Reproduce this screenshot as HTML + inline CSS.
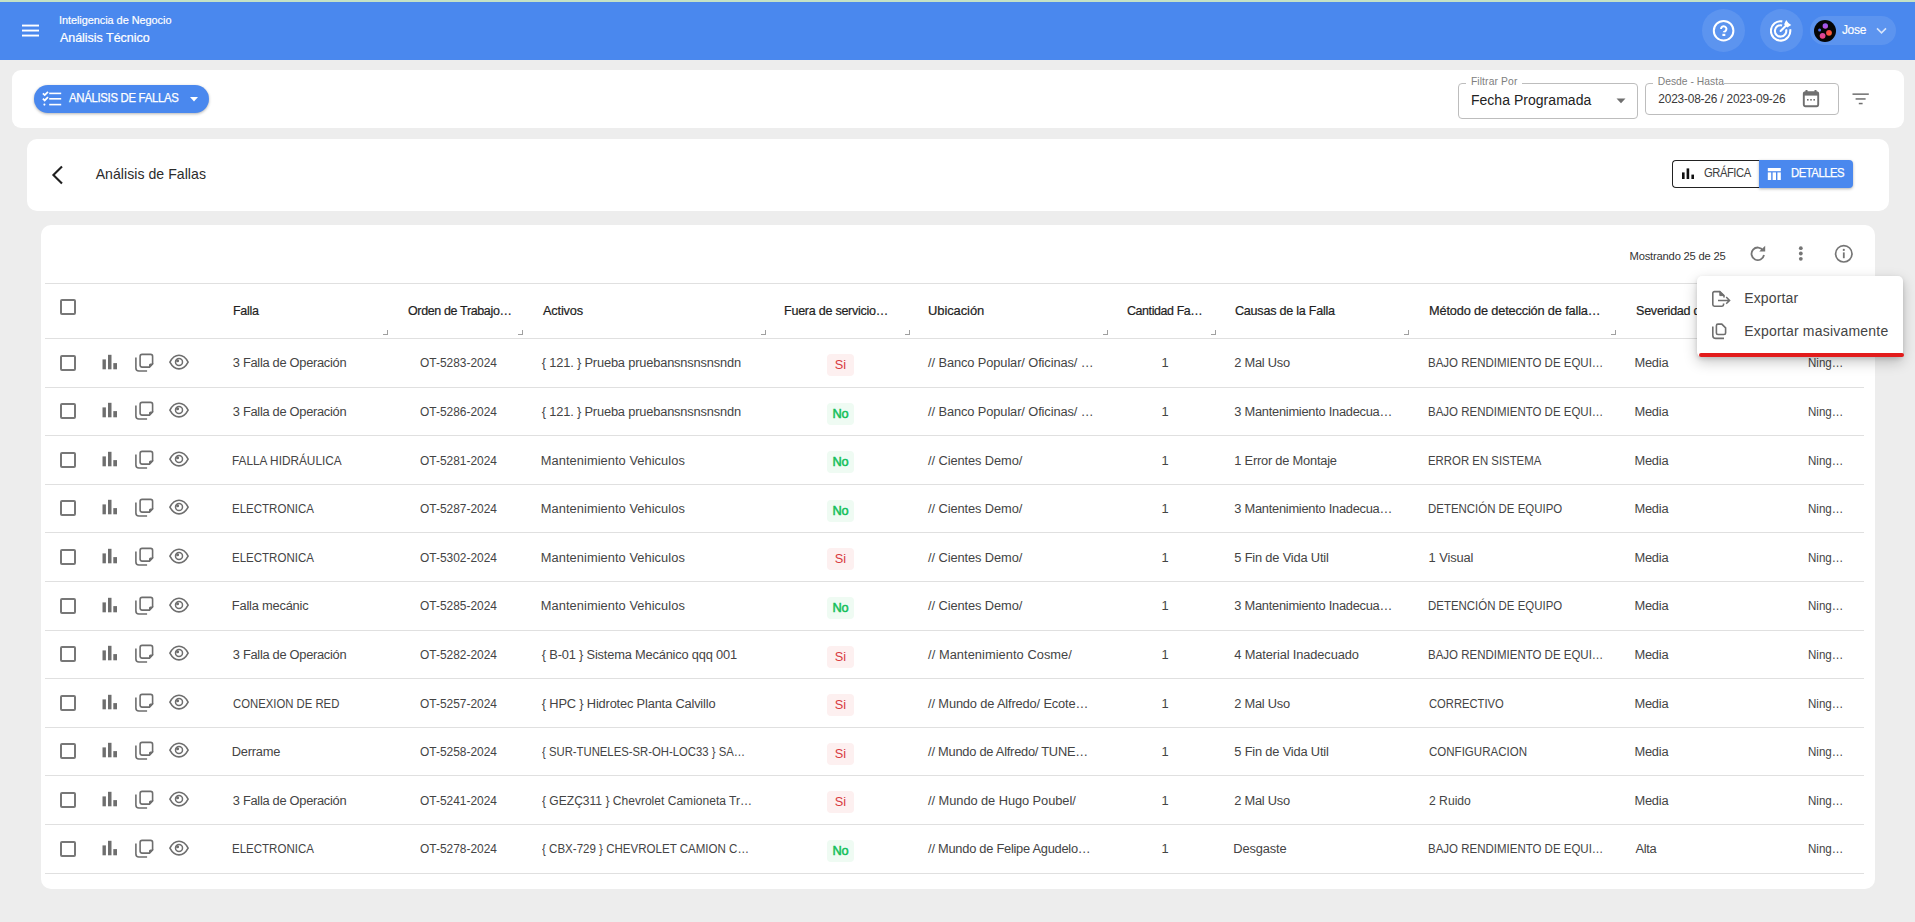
<!DOCTYPE html>
<html><head><meta charset="utf-8">
<style>
*{box-sizing:border-box;margin:0;padding:0}
html,body{width:1915px;height:922px;overflow:hidden;background:#ededed;font-family:"Liberation Sans",sans-serif;color:#212121;position:relative}
.abs{position:absolute}
svg{display:block}
.tx{position:absolute;line-height:20px;white-space:nowrap}
.ic{position:absolute}
.card{position:absolute;background:#fff;border-radius:10px}
.field{position:absolute;border:1px solid #bdbdbd;border-radius:4px}
.hcirc{position:absolute;width:43px;height:43px;border-radius:50%;background:rgba(255,255,255,0.1)}
.hl{position:absolute;left:45px;width:1819px;height:1px;background:#e0e0e0}
.cb{position:absolute;width:16px;height:16px;border:2px solid #777;border-radius:2px}
.badge{position:absolute;width:27px;height:22px;border-radius:4px;font-size:12.8px;line-height:22px;text-align:center}
.badge.si{background:#fdf0f0;color:#d83a3f}
.badge.no{background:#effbf3;color:#12bf59;-webkit-text-stroke:0.5px #12bf59;letter-spacing:-0.2px}
.handle{position:absolute;top:330px;width:5px;height:5px;border-right:1px solid #a0a0a0;border-bottom:1px solid #a0a0a0}
</style></head>
<body>
<div class="abs" style="left:0;top:0;width:1915px;height:2px;background:#c5e2c5"></div>
<div class="abs" style="left:0;top:2px;width:1915px;height:58px;background:#4a88ee"></div>
<svg class="abs" style="left:22px;top:24px" width="18" height="14" viewBox="0 0 18 14"><rect x="0" y="0.6" width="17" height="1.9" fill="#fff"/><rect x="0" y="5.6" width="17" height="1.9" fill="#fff"/><rect x="0" y="10.6" width="17" height="1.9" fill="#fff"/></svg>
<div class="tx" style="left:58.90px;top:10.12px;font-size:10.9px;color:#fff;letter-spacing:-0.030px;-webkit-text-stroke:0.2px #fff;">Inteligencia de Negocio</div>
<div class="tx" style="left:59.91px;top:27.87px;font-size:12.5px;color:#fff;letter-spacing:-0.019px;-webkit-text-stroke:0.22px #fff;">Análisis Técnico</div>
<div class="hcirc" style="left:1702px;top:9px"></div>
<svg class="abs" style="left:1712px;top:19px" width="23" height="23" viewBox="0 0 23 23"><circle cx="11.6" cy="11.7" r="9.8" fill="none" stroke="#fff" stroke-width="2"/><path d="M9.05 10a2.7 2.7 0 1 1 4.35 2.13c-.7.45-1.65.8-1.65 1.0" fill="none" stroke="#fff" stroke-width="2"/><rect x="10.4" y="14.8" width="2.9" height="2.2" fill="#fff"/></svg>
<div class="hcirc" style="left:1759.5px;top:9px"></div>
<svg class="abs" style="left:1770px;top:19px" width="24" height="24" viewBox="0 0 24 24"><path d="M12.3 2.35A9.7 9.7 0 1 0 20.15 10.2" fill="none" stroke="#fff" stroke-width="2.1"/><path d="M12.1 6.4A5.7 5.7 0 1 0 16.1 10.4" fill="none" stroke="#fff" stroke-width="2.1"/><path d="M10.6 11.9L16.6 5.9" stroke="#fff" stroke-width="2.1" stroke-linecap="round"/><path d="M16.2 0.9L18.4 3.9 21.3 6.1 17.2 8.4 14.1 5.3z" fill="#fff"/></svg>
<div class="abs" style="left:1810px;top:16px;width:86px;height:29px;border-radius:15px;background:rgba(255,255,255,0.1)"></div>
<svg class="abs" style="left:1814px;top:20px" width="22" height="22" viewBox="0 0 22 22"><defs><linearGradient id="gp" x1="0" y1="0" x2="0" y2="1"><stop offset="0" stop-color="#8f5ff0"/><stop offset="1" stop-color="#c04bd8"/></linearGradient><linearGradient id="gr" x1="0" y1="0" x2="1" y2="1"><stop offset="0" stop-color="#f03a5a"/><stop offset="1" stop-color="#ff6a2a"/></linearGradient><linearGradient id="gk" x1="0" y1="0" x2="0" y2="1"><stop offset="0" stop-color="#d04aa8"/><stop offset="1" stop-color="#f0407a"/></linearGradient></defs><circle cx="11" cy="11" r="11" fill="#050505"/><circle cx="11.3" cy="6" r="2.7" fill="url(#gp)"/><circle cx="5.6" cy="9.9" r="1.5" fill="#4a6ef0"/><circle cx="15" cy="12.8" r="2.9" fill="url(#gr)"/><circle cx="8.6" cy="15.8" r="2.9" fill="url(#gk)"/></svg>
<div class="tx" style="left:1841.88px;top:20.34px;font-size:12px;color:#fff;letter-spacing:-0.275px;-webkit-text-stroke:0.15px #fff;">Jose</div>
<svg class="abs" style="left:1876px;top:27px" width="11" height="8" viewBox="0 0 11 8"><path d="M1 1.4l4.5 4.5 4.5-4.5" fill="none" stroke="#fff" stroke-width="1.6" opacity="0.75"/></svg>

<div class="card" style="left:12px;top:70px;width:1892px;height:58px;border-radius:9px"></div>
<div class="abs" style="left:34px;top:85px;width:175px;height:28px;border-radius:14px;background:#4a88ee;box-shadow:0 1px 3px rgba(0,0,0,.3)"></div>
<svg class="abs" style="left:42px;top:91px" width="21" height="16" viewBox="0 0 21 16"><path d="M0.9 2.3l1.8 1.8 3.3-3.3M0.9 7.7l1.8 1.8 3.3-3.3" fill="none" stroke="#fff" stroke-width="1.8"/><circle cx="2.4" cy="13.6" r="1.05" fill="#fff"/><rect x="7.2" y="1.6" width="12" height="1.6" fill="#fff"/><rect x="7.2" y="7" width="12" height="1.6" fill="#fff"/><rect x="7.2" y="12.8" width="12" height="1.6" fill="#fff"/></svg>
<div class="tx" style="left:69.02px;top:88.08px;font-size:11.9px;color:#fff;letter-spacing:-0.316px;-webkit-text-stroke:0.25px #fff;transform:scaleX(0.9555);transform-origin:0 0;">ANÁLISIS DE FALLAS</div>
<svg class="abs" style="left:190px;top:97px" width="8" height="5" viewBox="0 0 8 5"><path d="M0 0h8L4 4.5z" fill="#fff"/></svg>

<div class="field" style="left:1458px;top:83px;width:180px;height:36px"></div>
<div class="abs" style="left:1466px;top:80px;width:56px;height:6px;background:#fff"></div>
<div class="tx" style="left:1470.90px;top:72.13px;font-size:10.3px;color:#808080;letter-spacing:0.123px;">Filtrar Por</div>
<div class="tx" style="left:1470.90px;top:90.45px;font-size:14px;color:#222;letter-spacing:0.036px;">Fecha Programada</div>
<svg class="abs" style="left:1616px;top:98px" width="10" height="6" viewBox="0 0 10 6"><path d="M0.5 0.5h9L5 5.3z" fill="#6f6f6f"/></svg>
<div class="field" style="left:1645px;top:83px;width:194px;height:32px"></div>
<div class="abs" style="left:1653px;top:80px;width:71px;height:6px;background:#fff"></div>
<div class="tx" style="left:1657.70px;top:72.03px;font-size:10.3px;color:#808080;letter-spacing:0.034px;">Desde - Hasta</div>
<div class="tx" style="left:1658.30px;top:88.78px;font-size:11.9px;color:#3a3a3a;letter-spacing:-0.193px;">2023-08-26 / 2023-09-26</div>
<svg class="abs" style="left:1802px;top:89px" width="18" height="19" viewBox="0 0 18 19"><path d="M4.5 1v3M13.5 1v3" stroke="#6f6f6f" stroke-width="2"/><rect x="1.8" y="3.2" width="14.4" height="14" rx="1.6" fill="none" stroke="#6f6f6f" stroke-width="1.9"/><rect x="1.8" y="3.2" width="14.4" height="3.4" fill="#6f6f6f"/><rect x="5" y="10" width="1.6" height="1.6" fill="#6f6f6f"/><rect x="8.2" y="10" width="1.6" height="1.6" fill="#6f6f6f"/><rect x="11.4" y="10" width="1.6" height="1.6" fill="#6f6f6f"/></svg>
<svg class="abs" style="left:1852px;top:93px" width="18" height="12" viewBox="0 0 18 12"><rect x="0.5" y="0.4" width="16.3" height="1.5" fill="#6f6f6f"/><rect x="3.6" y="5.2" width="10" height="1.5" fill="#6f6f6f"/><rect x="6.8" y="9.8" width="3.8" height="1.5" fill="#6f6f6f"/></svg>

<div class="card" style="left:27px;top:139px;width:1862px;height:72px"></div>
<svg class="abs" style="left:50px;top:165px" width="14" height="20" viewBox="0 0 14 20"><path d="M12 1.4L3.4 10 12 18.6" fill="none" stroke="#1f1f1f" stroke-width="2.1"/></svg>
<div class="tx" style="left:95.70px;top:164.41px;font-size:14.1px;color:#2b2b2b;letter-spacing:0.034px;">Análisis de Fallas</div>

<div class="abs" style="left:1672px;top:160px;width:88px;height:28px;border:1.2px solid #222;border-right:none;border-radius:4px 0 0 4px;background:#fff"></div>
<svg class="abs" style="left:1682px;top:168px" width="13" height="12" viewBox="0 0 13 12"><rect x="0" y="4.4" width="2.6" height="6.6" fill="#111"/><rect x="4.6" y="0.4" width="2.6" height="10.6" fill="#111"/><rect x="9.4" y="6.6" width="2.6" height="4.4" fill="#111"/></svg>
<div class="tx" style="left:1703.80px;top:163.48px;font-size:11.9px;color:#3d3d3d;letter-spacing:-0.490px;transform:scaleX(0.9444);transform-origin:0 0;">GRÁFICA</div>
<div class="abs" style="left:1759px;top:160px;width:94px;height:28px;background:#4a88ee;border-radius:0 4px 4px 0;box-shadow:0 1px 3px rgba(0,0,0,.3)"></div>
<svg class="abs" style="left:1767px;top:167px" width="15" height="15" viewBox="0 0 15 15"><rect x="0.8" y="1" width="13" height="3.2" fill="#fff"/><rect x="0.8" y="5.4" width="3.4" height="7.6" fill="#fff"/><rect x="5.6" y="5.4" width="3.4" height="7.6" fill="#fff"/><rect x="10.4" y="5.4" width="3.4" height="7.6" fill="#fff"/></svg>
<div class="tx" style="left:1790.72px;top:162.61px;font-size:12.1px;color:#fff;letter-spacing:-0.540px;-webkit-text-stroke:0.25px #fff;transform:scaleX(0.9382);transform-origin:0 0;">DETALLES</div>

<div class="card" style="left:41px;top:225px;width:1834px;height:664px"></div>
<div class="tx" style="left:1629.50px;top:246.22px;font-size:11.2px;color:#333;letter-spacing:-0.188px;">Mostrando 25 de 25</div>
<svg class="abs" style="left:1749px;top:245px" width="18" height="18" viewBox="0 0 18 18"><path d="M14.1 5.4A6.3 6.3 0 1 0 15 10" fill="none" stroke="#757575" stroke-width="1.8"/><path d="M10.2 6.6h6V0.8z" fill="#757575"/></svg>
<svg class="abs" style="left:1798px;top:246px" width="6" height="16" viewBox="0 0 6 16"><circle cx="2.8" cy="2.2" r="1.9" fill="#757575"/><circle cx="2.8" cy="7.5" r="1.9" fill="#757575"/><circle cx="2.8" cy="12.8" r="1.9" fill="#757575"/></svg>
<svg class="abs" style="left:1834px;top:244px" width="20" height="20" viewBox="0 0 20 20"><circle cx="9.8" cy="9.8" r="8.2" fill="none" stroke="#757575" stroke-width="1.7"/><rect x="8.9" y="8.4" width="1.8" height="5.8" fill="#757575"/><circle cx="9.8" cy="5.9" r="1.1" fill="#757575"/></svg>

<div class="hl" style="top:283px"></div>
<div class="hl" style="top:338px"></div>
<div class="cb" style="left:60px;top:299px"></div>
<div class="cb" style="left:60px;top:354.8px"></div><div class="ic" style="left:102px;top:352.5px"><svg width="18" height="20" viewBox="0 0 18 20"><rect x="0.5" y="6.4" width="3.4" height="9.9" fill="#6e6e6e"/><rect x="6" y="1.8" width="3.5" height="14.5" fill="#6e6e6e"/><rect x="11.3" y="10.1" width="3.7" height="6.2" fill="#6e6e6e"/></svg></div><div class="ic" style="left:134px;top:352.5px"><svg width="22" height="22" viewBox="0 0 22 22" fill="none" stroke="#6e6e6e" stroke-width="1.6"><path d="M8.1 1.4h8.5a2 2 0 0 1 2 2v7.6l-3.1 3.1H8.1a2 2 0 0 1-2-2V3.4a2 2 0 0 1 2-2z"/><path d="M15.6 13.6v-1.6a0.9 0.9 0 0 1 0.9-0.9h1.7z" fill="#6e6e6e" stroke-width="1.2"/><path d="M1.9 4.6v10.4a3 3 0 0 0 3 3h8.2"/></svg></div><div class="ic" style="left:168px;top:352.5px"><svg width="22" height="20" viewBox="0 0 22 20" fill="none" stroke="#6e6e6e" stroke-width="1.6"><path d="M1.9 9.1C4.3 4.6 7.4 2.3 11 2.3S17.7 4.6 20.1 9.1C17.7 13.6 14.6 15.9 11 15.9S4.3 13.6 1.9 9.1z"/><circle cx="11" cy="9.1" r="3.5" stroke-width="1.5"/><circle cx="9.6" cy="7.7" r="1.5" fill="#6e6e6e" stroke="none"/></svg></div><div class="tx" style="left:232.80px;top:352.85px;font-size:12.85px;color:#444;letter-spacing:-0.289px;">3 Falla de Operación</div><div class="tx" style="left:541.80px;top:352.85px;font-size:12.85px;color:#444;letter-spacing:-0.178px;">{ 121. } Prueba pruebansnsnsnsndn</div><div class="tx" style="left:928.10px;top:352.85px;font-size:12.85px;color:#444;letter-spacing:-0.108px;">// Banco Popular/ Oficinas/ …</div><div class="tx" style="left:1234.30px;top:352.85px;font-size:12.85px;color:#444;letter-spacing:-0.247px;">2 Mal Uso</div><div class="tx" style="left:1427.71px;top:352.85px;font-size:12.85px;color:#444;transform:scaleX(0.8946);transform-origin:0 0;">BAJO RENDIMIENTO DE EQUI…</div><div class="tx" style="left:1634.50px;top:352.85px;font-size:12.85px;color:#444;letter-spacing:-0.235px;">Media</div><div class="tx" style="left:1808.10px;top:352.85px;font-size:12.85px;color:#444;transform:scaleX(0.9007);transform-origin:0 0;">Ning…</div><div class="tx" style="left:420.40px;top:352.85px;font-size:12.85px;color:#444;transform:scaleX(0.9289);transform-origin:0 0;">OT-5283-2024</div><div class="tx" style="left:1161.60px;top:352.85px;font-size:12.85px;color:#444;">1</div><div class="badge si" style="left:827px;top:354.0px">Si</div><div class="hl" style="top:387px"></div><div class="cb" style="left:60px;top:403.3px"></div><div class="ic" style="left:102px;top:401.0px"><svg width="18" height="20" viewBox="0 0 18 20"><rect x="0.5" y="6.4" width="3.4" height="9.9" fill="#6e6e6e"/><rect x="6" y="1.8" width="3.5" height="14.5" fill="#6e6e6e"/><rect x="11.3" y="10.1" width="3.7" height="6.2" fill="#6e6e6e"/></svg></div><div class="ic" style="left:134px;top:401.0px"><svg width="22" height="22" viewBox="0 0 22 22" fill="none" stroke="#6e6e6e" stroke-width="1.6"><path d="M8.1 1.4h8.5a2 2 0 0 1 2 2v7.6l-3.1 3.1H8.1a2 2 0 0 1-2-2V3.4a2 2 0 0 1 2-2z"/><path d="M15.6 13.6v-1.6a0.9 0.9 0 0 1 0.9-0.9h1.7z" fill="#6e6e6e" stroke-width="1.2"/><path d="M1.9 4.6v10.4a3 3 0 0 0 3 3h8.2"/></svg></div><div class="ic" style="left:168px;top:401.0px"><svg width="22" height="20" viewBox="0 0 22 20" fill="none" stroke="#6e6e6e" stroke-width="1.6"><path d="M1.9 9.1C4.3 4.6 7.4 2.3 11 2.3S17.7 4.6 20.1 9.1C17.7 13.6 14.6 15.9 11 15.9S4.3 13.6 1.9 9.1z"/><circle cx="11" cy="9.1" r="3.5" stroke-width="1.5"/><circle cx="9.6" cy="7.7" r="1.5" fill="#6e6e6e" stroke="none"/></svg></div><div class="tx" style="left:232.80px;top:401.85px;font-size:12.85px;color:#444;letter-spacing:-0.289px;">3 Falla de Operación</div><div class="tx" style="left:541.80px;top:401.85px;font-size:12.85px;color:#444;letter-spacing:-0.178px;">{ 121. } Prueba pruebansnsnsnsndn</div><div class="tx" style="left:928.10px;top:401.85px;font-size:12.85px;color:#444;letter-spacing:-0.108px;">// Banco Popular/ Oficinas/ …</div><div class="tx" style="left:1234.30px;top:401.85px;font-size:12.85px;color:#444;letter-spacing:-0.257px;">3 Mantenimiento Inadecua…</div><div class="tx" style="left:1427.71px;top:401.85px;font-size:12.85px;color:#444;transform:scaleX(0.8946);transform-origin:0 0;">BAJO RENDIMIENTO DE EQUI…</div><div class="tx" style="left:1634.50px;top:401.85px;font-size:12.85px;color:#444;letter-spacing:-0.235px;">Media</div><div class="tx" style="left:1808.10px;top:401.85px;font-size:12.85px;color:#444;transform:scaleX(0.9007);transform-origin:0 0;">Ning…</div><div class="tx" style="left:420.40px;top:401.85px;font-size:12.85px;color:#444;transform:scaleX(0.9289);transform-origin:0 0;">OT-5286-2024</div><div class="tx" style="left:1161.60px;top:401.85px;font-size:12.85px;color:#444;">1</div><div class="badge no" style="left:827px;top:402.5px">No</div><div class="hl" style="top:435px"></div><div class="cb" style="left:60px;top:451.8px"></div><div class="ic" style="left:102px;top:449.5px"><svg width="18" height="20" viewBox="0 0 18 20"><rect x="0.5" y="6.4" width="3.4" height="9.9" fill="#6e6e6e"/><rect x="6" y="1.8" width="3.5" height="14.5" fill="#6e6e6e"/><rect x="11.3" y="10.1" width="3.7" height="6.2" fill="#6e6e6e"/></svg></div><div class="ic" style="left:134px;top:449.5px"><svg width="22" height="22" viewBox="0 0 22 22" fill="none" stroke="#6e6e6e" stroke-width="1.6"><path d="M8.1 1.4h8.5a2 2 0 0 1 2 2v7.6l-3.1 3.1H8.1a2 2 0 0 1-2-2V3.4a2 2 0 0 1 2-2z"/><path d="M15.6 13.6v-1.6a0.9 0.9 0 0 1 0.9-0.9h1.7z" fill="#6e6e6e" stroke-width="1.2"/><path d="M1.9 4.6v10.4a3 3 0 0 0 3 3h8.2"/></svg></div><div class="ic" style="left:168px;top:449.5px"><svg width="22" height="20" viewBox="0 0 22 20" fill="none" stroke="#6e6e6e" stroke-width="1.6"><path d="M1.9 9.1C4.3 4.6 7.4 2.3 11 2.3S17.7 4.6 20.1 9.1C17.7 13.6 14.6 15.9 11 15.9S4.3 13.6 1.9 9.1z"/><circle cx="11" cy="9.1" r="3.5" stroke-width="1.5"/><circle cx="9.6" cy="7.7" r="1.5" fill="#6e6e6e" stroke="none"/></svg></div><div class="tx" style="left:231.88px;top:450.85px;font-size:12.85px;color:#444;transform:scaleX(0.9200);transform-origin:0 0;">FALLA HIDRÁULICA</div><div class="tx" style="left:540.80px;top:450.85px;font-size:12.85px;color:#444;letter-spacing:0.056px;">Mantenimiento Vehiculos</div><div class="tx" style="left:928.10px;top:450.85px;font-size:12.85px;color:#444;letter-spacing:-0.099px;">// Cientes Demo/</div><div class="tx" style="left:1234.30px;top:450.85px;font-size:12.85px;color:#444;letter-spacing:-0.219px;">1 Error de Montaje</div><div class="tx" style="left:1427.71px;top:450.85px;font-size:12.85px;color:#444;transform:scaleX(0.8870);transform-origin:0 0;">ERROR EN SISTEMA</div><div class="tx" style="left:1634.50px;top:450.85px;font-size:12.85px;color:#444;letter-spacing:-0.235px;">Media</div><div class="tx" style="left:1808.10px;top:450.85px;font-size:12.85px;color:#444;transform:scaleX(0.9007);transform-origin:0 0;">Ning…</div><div class="tx" style="left:420.40px;top:450.85px;font-size:12.85px;color:#444;transform:scaleX(0.9289);transform-origin:0 0;">OT-5281-2024</div><div class="tx" style="left:1161.60px;top:450.85px;font-size:12.85px;color:#444;">1</div><div class="badge no" style="left:827px;top:451.0px">No</div><div class="hl" style="top:484px"></div><div class="cb" style="left:60px;top:500.3px"></div><div class="ic" style="left:102px;top:498.0px"><svg width="18" height="20" viewBox="0 0 18 20"><rect x="0.5" y="6.4" width="3.4" height="9.9" fill="#6e6e6e"/><rect x="6" y="1.8" width="3.5" height="14.5" fill="#6e6e6e"/><rect x="11.3" y="10.1" width="3.7" height="6.2" fill="#6e6e6e"/></svg></div><div class="ic" style="left:134px;top:498.0px"><svg width="22" height="22" viewBox="0 0 22 22" fill="none" stroke="#6e6e6e" stroke-width="1.6"><path d="M8.1 1.4h8.5a2 2 0 0 1 2 2v7.6l-3.1 3.1H8.1a2 2 0 0 1-2-2V3.4a2 2 0 0 1 2-2z"/><path d="M15.6 13.6v-1.6a0.9 0.9 0 0 1 0.9-0.9h1.7z" fill="#6e6e6e" stroke-width="1.2"/><path d="M1.9 4.6v10.4a3 3 0 0 0 3 3h8.2"/></svg></div><div class="ic" style="left:168px;top:498.0px"><svg width="22" height="20" viewBox="0 0 22 20" fill="none" stroke="#6e6e6e" stroke-width="1.6"><path d="M1.9 9.1C4.3 4.6 7.4 2.3 11 2.3S17.7 4.6 20.1 9.1C17.7 13.6 14.6 15.9 11 15.9S4.3 13.6 1.9 9.1z"/><circle cx="11" cy="9.1" r="3.5" stroke-width="1.5"/><circle cx="9.6" cy="7.7" r="1.5" fill="#6e6e6e" stroke="none"/></svg></div><div class="tx" style="left:231.90px;top:498.85px;font-size:12.85px;color:#444;transform:scaleX(0.8967);transform-origin:0 0;">ELECTRONICA</div><div class="tx" style="left:540.80px;top:498.85px;font-size:12.85px;color:#444;letter-spacing:0.056px;">Mantenimiento Vehiculos</div><div class="tx" style="left:928.10px;top:498.85px;font-size:12.85px;color:#444;letter-spacing:-0.099px;">// Cientes Demo/</div><div class="tx" style="left:1234.30px;top:498.85px;font-size:12.85px;color:#444;letter-spacing:-0.257px;">3 Mantenimiento Inadecua…</div><div class="tx" style="left:1427.71px;top:498.85px;font-size:12.85px;color:#444;transform:scaleX(0.8911);transform-origin:0 0;">DETENCIÓN DE EQUIPO</div><div class="tx" style="left:1634.50px;top:498.85px;font-size:12.85px;color:#444;letter-spacing:-0.235px;">Media</div><div class="tx" style="left:1808.10px;top:498.85px;font-size:12.85px;color:#444;transform:scaleX(0.9007);transform-origin:0 0;">Ning…</div><div class="tx" style="left:420.40px;top:498.85px;font-size:12.85px;color:#444;transform:scaleX(0.9289);transform-origin:0 0;">OT-5287-2024</div><div class="tx" style="left:1161.60px;top:498.85px;font-size:12.85px;color:#444;">1</div><div class="badge no" style="left:827px;top:499.5px">No</div><div class="hl" style="top:532px"></div><div class="cb" style="left:60px;top:548.8px"></div><div class="ic" style="left:102px;top:546.5px"><svg width="18" height="20" viewBox="0 0 18 20"><rect x="0.5" y="6.4" width="3.4" height="9.9" fill="#6e6e6e"/><rect x="6" y="1.8" width="3.5" height="14.5" fill="#6e6e6e"/><rect x="11.3" y="10.1" width="3.7" height="6.2" fill="#6e6e6e"/></svg></div><div class="ic" style="left:134px;top:546.5px"><svg width="22" height="22" viewBox="0 0 22 22" fill="none" stroke="#6e6e6e" stroke-width="1.6"><path d="M8.1 1.4h8.5a2 2 0 0 1 2 2v7.6l-3.1 3.1H8.1a2 2 0 0 1-2-2V3.4a2 2 0 0 1 2-2z"/><path d="M15.6 13.6v-1.6a0.9 0.9 0 0 1 0.9-0.9h1.7z" fill="#6e6e6e" stroke-width="1.2"/><path d="M1.9 4.6v10.4a3 3 0 0 0 3 3h8.2"/></svg></div><div class="ic" style="left:168px;top:546.5px"><svg width="22" height="20" viewBox="0 0 22 20" fill="none" stroke="#6e6e6e" stroke-width="1.6"><path d="M1.9 9.1C4.3 4.6 7.4 2.3 11 2.3S17.7 4.6 20.1 9.1C17.7 13.6 14.6 15.9 11 15.9S4.3 13.6 1.9 9.1z"/><circle cx="11" cy="9.1" r="3.5" stroke-width="1.5"/><circle cx="9.6" cy="7.7" r="1.5" fill="#6e6e6e" stroke="none"/></svg></div><div class="tx" style="left:231.90px;top:547.85px;font-size:12.85px;color:#444;transform:scaleX(0.8967);transform-origin:0 0;">ELECTRONICA</div><div class="tx" style="left:540.80px;top:547.85px;font-size:12.85px;color:#444;letter-spacing:0.056px;">Mantenimiento Vehiculos</div><div class="tx" style="left:928.10px;top:547.85px;font-size:12.85px;color:#444;letter-spacing:-0.099px;">// Cientes Demo/</div><div class="tx" style="left:1234.30px;top:547.85px;font-size:12.85px;color:#444;letter-spacing:-0.177px;">5 Fin de Vida Util</div><div class="tx" style="left:1428.60px;top:547.85px;font-size:12.85px;color:#444;letter-spacing:-0.087px;">1 Visual</div><div class="tx" style="left:1634.50px;top:547.85px;font-size:12.85px;color:#444;letter-spacing:-0.235px;">Media</div><div class="tx" style="left:1808.10px;top:547.85px;font-size:12.85px;color:#444;transform:scaleX(0.9007);transform-origin:0 0;">Ning…</div><div class="tx" style="left:420.40px;top:547.85px;font-size:12.85px;color:#444;transform:scaleX(0.9289);transform-origin:0 0;">OT-5302-2024</div><div class="tx" style="left:1161.60px;top:547.85px;font-size:12.85px;color:#444;">1</div><div class="badge si" style="left:827px;top:548.0px">Si</div><div class="hl" style="top:581px"></div><div class="cb" style="left:60px;top:597.8px"></div><div class="ic" style="left:102px;top:595.5px"><svg width="18" height="20" viewBox="0 0 18 20"><rect x="0.5" y="6.4" width="3.4" height="9.9" fill="#6e6e6e"/><rect x="6" y="1.8" width="3.5" height="14.5" fill="#6e6e6e"/><rect x="11.3" y="10.1" width="3.7" height="6.2" fill="#6e6e6e"/></svg></div><div class="ic" style="left:134px;top:595.5px"><svg width="22" height="22" viewBox="0 0 22 22" fill="none" stroke="#6e6e6e" stroke-width="1.6"><path d="M8.1 1.4h8.5a2 2 0 0 1 2 2v7.6l-3.1 3.1H8.1a2 2 0 0 1-2-2V3.4a2 2 0 0 1 2-2z"/><path d="M15.6 13.6v-1.6a0.9 0.9 0 0 1 0.9-0.9h1.7z" fill="#6e6e6e" stroke-width="1.2"/><path d="M1.9 4.6v10.4a3 3 0 0 0 3 3h8.2"/></svg></div><div class="ic" style="left:168px;top:595.5px"><svg width="22" height="20" viewBox="0 0 22 20" fill="none" stroke="#6e6e6e" stroke-width="1.6"><path d="M1.9 9.1C4.3 4.6 7.4 2.3 11 2.3S17.7 4.6 20.1 9.1C17.7 13.6 14.6 15.9 11 15.9S4.3 13.6 1.9 9.1z"/><circle cx="11" cy="9.1" r="3.5" stroke-width="1.5"/><circle cx="9.6" cy="7.7" r="1.5" fill="#6e6e6e" stroke="none"/></svg></div><div class="tx" style="left:231.80px;top:595.85px;font-size:12.85px;color:#444;letter-spacing:-0.201px;">Falla mecánic</div><div class="tx" style="left:540.80px;top:595.85px;font-size:12.85px;color:#444;letter-spacing:0.056px;">Mantenimiento Vehiculos</div><div class="tx" style="left:928.10px;top:595.85px;font-size:12.85px;color:#444;letter-spacing:-0.099px;">// Cientes Demo/</div><div class="tx" style="left:1234.30px;top:595.85px;font-size:12.85px;color:#444;letter-spacing:-0.257px;">3 Mantenimiento Inadecua…</div><div class="tx" style="left:1427.71px;top:595.85px;font-size:12.85px;color:#444;transform:scaleX(0.8911);transform-origin:0 0;">DETENCIÓN DE EQUIPO</div><div class="tx" style="left:1634.50px;top:595.85px;font-size:12.85px;color:#444;letter-spacing:-0.235px;">Media</div><div class="tx" style="left:1808.10px;top:595.85px;font-size:12.85px;color:#444;transform:scaleX(0.9007);transform-origin:0 0;">Ning…</div><div class="tx" style="left:420.40px;top:595.85px;font-size:12.85px;color:#444;transform:scaleX(0.9289);transform-origin:0 0;">OT-5285-2024</div><div class="tx" style="left:1161.60px;top:595.85px;font-size:12.85px;color:#444;">1</div><div class="badge no" style="left:827px;top:597.0px">No</div><div class="hl" style="top:630px"></div><div class="cb" style="left:60px;top:646.3px"></div><div class="ic" style="left:102px;top:644.0px"><svg width="18" height="20" viewBox="0 0 18 20"><rect x="0.5" y="6.4" width="3.4" height="9.9" fill="#6e6e6e"/><rect x="6" y="1.8" width="3.5" height="14.5" fill="#6e6e6e"/><rect x="11.3" y="10.1" width="3.7" height="6.2" fill="#6e6e6e"/></svg></div><div class="ic" style="left:134px;top:644.0px"><svg width="22" height="22" viewBox="0 0 22 22" fill="none" stroke="#6e6e6e" stroke-width="1.6"><path d="M8.1 1.4h8.5a2 2 0 0 1 2 2v7.6l-3.1 3.1H8.1a2 2 0 0 1-2-2V3.4a2 2 0 0 1 2-2z"/><path d="M15.6 13.6v-1.6a0.9 0.9 0 0 1 0.9-0.9h1.7z" fill="#6e6e6e" stroke-width="1.2"/><path d="M1.9 4.6v10.4a3 3 0 0 0 3 3h8.2"/></svg></div><div class="ic" style="left:168px;top:644.0px"><svg width="22" height="20" viewBox="0 0 22 20" fill="none" stroke="#6e6e6e" stroke-width="1.6"><path d="M1.9 9.1C4.3 4.6 7.4 2.3 11 2.3S17.7 4.6 20.1 9.1C17.7 13.6 14.6 15.9 11 15.9S4.3 13.6 1.9 9.1z"/><circle cx="11" cy="9.1" r="3.5" stroke-width="1.5"/><circle cx="9.6" cy="7.7" r="1.5" fill="#6e6e6e" stroke="none"/></svg></div><div class="tx" style="left:232.80px;top:644.85px;font-size:12.85px;color:#444;letter-spacing:-0.289px;">3 Falla de Operación</div><div class="tx" style="left:541.80px;top:644.85px;font-size:12.85px;color:#444;letter-spacing:-0.187px;">{ B-01 } Sistema Mecánico qqq 001</div><div class="tx" style="left:928.10px;top:644.85px;font-size:12.85px;color:#444;letter-spacing:0.045px;">// Mantenimiento Cosme/</div><div class="tx" style="left:1234.30px;top:644.85px;font-size:12.85px;color:#444;letter-spacing:-0.128px;">4 Material Inadecuado</div><div class="tx" style="left:1427.71px;top:644.85px;font-size:12.85px;color:#444;transform:scaleX(0.8946);transform-origin:0 0;">BAJO RENDIMIENTO DE EQUI…</div><div class="tx" style="left:1634.50px;top:644.85px;font-size:12.85px;color:#444;letter-spacing:-0.235px;">Media</div><div class="tx" style="left:1808.10px;top:644.85px;font-size:12.85px;color:#444;transform:scaleX(0.9007);transform-origin:0 0;">Ning…</div><div class="tx" style="left:420.40px;top:644.85px;font-size:12.85px;color:#444;transform:scaleX(0.9289);transform-origin:0 0;">OT-5282-2024</div><div class="tx" style="left:1161.60px;top:644.85px;font-size:12.85px;color:#444;">1</div><div class="badge si" style="left:827px;top:645.5px">Si</div><div class="hl" style="top:678px"></div><div class="cb" style="left:60px;top:694.8px"></div><div class="ic" style="left:102px;top:692.5px"><svg width="18" height="20" viewBox="0 0 18 20"><rect x="0.5" y="6.4" width="3.4" height="9.9" fill="#6e6e6e"/><rect x="6" y="1.8" width="3.5" height="14.5" fill="#6e6e6e"/><rect x="11.3" y="10.1" width="3.7" height="6.2" fill="#6e6e6e"/></svg></div><div class="ic" style="left:134px;top:692.5px"><svg width="22" height="22" viewBox="0 0 22 22" fill="none" stroke="#6e6e6e" stroke-width="1.6"><path d="M8.1 1.4h8.5a2 2 0 0 1 2 2v7.6l-3.1 3.1H8.1a2 2 0 0 1-2-2V3.4a2 2 0 0 1 2-2z"/><path d="M15.6 13.6v-1.6a0.9 0.9 0 0 1 0.9-0.9h1.7z" fill="#6e6e6e" stroke-width="1.2"/><path d="M1.9 4.6v10.4a3 3 0 0 0 3 3h8.2"/></svg></div><div class="ic" style="left:168px;top:692.5px"><svg width="22" height="20" viewBox="0 0 22 20" fill="none" stroke="#6e6e6e" stroke-width="1.6"><path d="M1.9 9.1C4.3 4.6 7.4 2.3 11 2.3S17.7 4.6 20.1 9.1C17.7 13.6 14.6 15.9 11 15.9S4.3 13.6 1.9 9.1z"/><circle cx="11" cy="9.1" r="3.5" stroke-width="1.5"/><circle cx="9.6" cy="7.7" r="1.5" fill="#6e6e6e" stroke="none"/></svg></div><div class="tx" style="left:232.80px;top:693.85px;font-size:12.85px;color:#444;transform:scaleX(0.8817);transform-origin:0 0;">CONEXION DE RED</div><div class="tx" style="left:541.80px;top:693.85px;font-size:12.85px;color:#444;letter-spacing:-0.175px;">{ HPC } Hidrotec Planta Calvillo</div><div class="tx" style="left:928.10px;top:693.85px;font-size:12.85px;color:#444;letter-spacing:-0.153px;">// Mundo de Alfredo/ Ecote…</div><div class="tx" style="left:1234.30px;top:693.85px;font-size:12.85px;color:#444;letter-spacing:-0.247px;">2 Mal Uso</div><div class="tx" style="left:1428.60px;top:693.85px;font-size:12.85px;color:#444;transform:scaleX(0.8734);transform-origin:0 0;">CORRECTIVO</div><div class="tx" style="left:1634.50px;top:693.85px;font-size:12.85px;color:#444;letter-spacing:-0.235px;">Media</div><div class="tx" style="left:1808.10px;top:693.85px;font-size:12.85px;color:#444;transform:scaleX(0.9007);transform-origin:0 0;">Ning…</div><div class="tx" style="left:420.40px;top:693.85px;font-size:12.85px;color:#444;transform:scaleX(0.9289);transform-origin:0 0;">OT-5257-2024</div><div class="tx" style="left:1161.60px;top:693.85px;font-size:12.85px;color:#444;">1</div><div class="badge si" style="left:827px;top:694.0px">Si</div><div class="hl" style="top:727px"></div><div class="cb" style="left:60px;top:743.3px"></div><div class="ic" style="left:102px;top:741.0px"><svg width="18" height="20" viewBox="0 0 18 20"><rect x="0.5" y="6.4" width="3.4" height="9.9" fill="#6e6e6e"/><rect x="6" y="1.8" width="3.5" height="14.5" fill="#6e6e6e"/><rect x="11.3" y="10.1" width="3.7" height="6.2" fill="#6e6e6e"/></svg></div><div class="ic" style="left:134px;top:741.0px"><svg width="22" height="22" viewBox="0 0 22 22" fill="none" stroke="#6e6e6e" stroke-width="1.6"><path d="M8.1 1.4h8.5a2 2 0 0 1 2 2v7.6l-3.1 3.1H8.1a2 2 0 0 1-2-2V3.4a2 2 0 0 1 2-2z"/><path d="M15.6 13.6v-1.6a0.9 0.9 0 0 1 0.9-0.9h1.7z" fill="#6e6e6e" stroke-width="1.2"/><path d="M1.9 4.6v10.4a3 3 0 0 0 3 3h8.2"/></svg></div><div class="ic" style="left:168px;top:741.0px"><svg width="22" height="20" viewBox="0 0 22 20" fill="none" stroke="#6e6e6e" stroke-width="1.6"><path d="M1.9 9.1C4.3 4.6 7.4 2.3 11 2.3S17.7 4.6 20.1 9.1C17.7 13.6 14.6 15.9 11 15.9S4.3 13.6 1.9 9.1z"/><circle cx="11" cy="9.1" r="3.5" stroke-width="1.5"/><circle cx="9.6" cy="7.7" r="1.5" fill="#6e6e6e" stroke="none"/></svg></div><div class="tx" style="left:231.80px;top:741.85px;font-size:12.85px;color:#444;letter-spacing:-0.236px;">Derrame</div><div class="tx" style="left:541.80px;top:741.85px;font-size:12.85px;color:#444;transform:scaleX(0.8808);transform-origin:0 0;">{ SUR-TUNELES-SR-OH-LOC33 } SA…</div><div class="tx" style="left:928.10px;top:741.85px;font-size:12.85px;color:#444;letter-spacing:-0.244px;">// Mundo de Alfredo/ TUNE…</div><div class="tx" style="left:1234.30px;top:741.85px;font-size:12.85px;color:#444;letter-spacing:-0.177px;">5 Fin de Vida Util</div><div class="tx" style="left:1428.60px;top:741.85px;font-size:12.85px;color:#444;transform:scaleX(0.8972);transform-origin:0 0;">CONFIGURACION</div><div class="tx" style="left:1634.50px;top:741.85px;font-size:12.85px;color:#444;letter-spacing:-0.235px;">Media</div><div class="tx" style="left:1808.10px;top:741.85px;font-size:12.85px;color:#444;transform:scaleX(0.9007);transform-origin:0 0;">Ning…</div><div class="tx" style="left:420.40px;top:741.85px;font-size:12.85px;color:#444;transform:scaleX(0.9289);transform-origin:0 0;">OT-5258-2024</div><div class="tx" style="left:1161.60px;top:741.85px;font-size:12.85px;color:#444;">1</div><div class="badge si" style="left:827px;top:742.5px">Si</div><div class="hl" style="top:775px"></div><div class="cb" style="left:60px;top:791.8px"></div><div class="ic" style="left:102px;top:789.5px"><svg width="18" height="20" viewBox="0 0 18 20"><rect x="0.5" y="6.4" width="3.4" height="9.9" fill="#6e6e6e"/><rect x="6" y="1.8" width="3.5" height="14.5" fill="#6e6e6e"/><rect x="11.3" y="10.1" width="3.7" height="6.2" fill="#6e6e6e"/></svg></div><div class="ic" style="left:134px;top:789.5px"><svg width="22" height="22" viewBox="0 0 22 22" fill="none" stroke="#6e6e6e" stroke-width="1.6"><path d="M8.1 1.4h8.5a2 2 0 0 1 2 2v7.6l-3.1 3.1H8.1a2 2 0 0 1-2-2V3.4a2 2 0 0 1 2-2z"/><path d="M15.6 13.6v-1.6a0.9 0.9 0 0 1 0.9-0.9h1.7z" fill="#6e6e6e" stroke-width="1.2"/><path d="M1.9 4.6v10.4a3 3 0 0 0 3 3h8.2"/></svg></div><div class="ic" style="left:168px;top:789.5px"><svg width="22" height="20" viewBox="0 0 22 20" fill="none" stroke="#6e6e6e" stroke-width="1.6"><path d="M1.9 9.1C4.3 4.6 7.4 2.3 11 2.3S17.7 4.6 20.1 9.1C17.7 13.6 14.6 15.9 11 15.9S4.3 13.6 1.9 9.1z"/><circle cx="11" cy="9.1" r="3.5" stroke-width="1.5"/><circle cx="9.6" cy="7.7" r="1.5" fill="#6e6e6e" stroke="none"/></svg></div><div class="tx" style="left:232.80px;top:790.85px;font-size:12.85px;color:#444;letter-spacing:-0.289px;">3 Falla de Operación</div><div class="tx" style="left:541.80px;top:790.85px;font-size:12.85px;color:#444;transform:scaleX(0.9382);transform-origin:0 0;">{ GEZÇ311 } Chevrolet Camioneta Tr…</div><div class="tx" style="left:928.10px;top:790.85px;font-size:12.85px;color:#444;letter-spacing:-0.068px;">// Mundo de Hugo Poubel/</div><div class="tx" style="left:1234.30px;top:790.85px;font-size:12.85px;color:#444;letter-spacing:-0.247px;">2 Mal Uso</div><div class="tx" style="left:1428.60px;top:790.85px;font-size:12.85px;color:#444;transform:scaleX(0.9450);transform-origin:0 0;">2 Ruido</div><div class="tx" style="left:1634.50px;top:790.85px;font-size:12.85px;color:#444;letter-spacing:-0.235px;">Media</div><div class="tx" style="left:1808.10px;top:790.85px;font-size:12.85px;color:#444;transform:scaleX(0.9007);transform-origin:0 0;">Ning…</div><div class="tx" style="left:420.40px;top:790.85px;font-size:12.85px;color:#444;transform:scaleX(0.9289);transform-origin:0 0;">OT-5241-2024</div><div class="tx" style="left:1161.60px;top:790.85px;font-size:12.85px;color:#444;">1</div><div class="badge si" style="left:827px;top:791.0px">Si</div><div class="hl" style="top:824px"></div><div class="cb" style="left:60px;top:840.8px"></div><div class="ic" style="left:102px;top:838.5px"><svg width="18" height="20" viewBox="0 0 18 20"><rect x="0.5" y="6.4" width="3.4" height="9.9" fill="#6e6e6e"/><rect x="6" y="1.8" width="3.5" height="14.5" fill="#6e6e6e"/><rect x="11.3" y="10.1" width="3.7" height="6.2" fill="#6e6e6e"/></svg></div><div class="ic" style="left:134px;top:838.5px"><svg width="22" height="22" viewBox="0 0 22 22" fill="none" stroke="#6e6e6e" stroke-width="1.6"><path d="M8.1 1.4h8.5a2 2 0 0 1 2 2v7.6l-3.1 3.1H8.1a2 2 0 0 1-2-2V3.4a2 2 0 0 1 2-2z"/><path d="M15.6 13.6v-1.6a0.9 0.9 0 0 1 0.9-0.9h1.7z" fill="#6e6e6e" stroke-width="1.2"/><path d="M1.9 4.6v10.4a3 3 0 0 0 3 3h8.2"/></svg></div><div class="ic" style="left:168px;top:838.5px"><svg width="22" height="20" viewBox="0 0 22 20" fill="none" stroke="#6e6e6e" stroke-width="1.6"><path d="M1.9 9.1C4.3 4.6 7.4 2.3 11 2.3S17.7 4.6 20.1 9.1C17.7 13.6 14.6 15.9 11 15.9S4.3 13.6 1.9 9.1z"/><circle cx="11" cy="9.1" r="3.5" stroke-width="1.5"/><circle cx="9.6" cy="7.7" r="1.5" fill="#6e6e6e" stroke="none"/></svg></div><div class="tx" style="left:231.90px;top:838.85px;font-size:12.85px;color:#444;transform:scaleX(0.8967);transform-origin:0 0;">ELECTRONICA</div><div class="tx" style="left:541.80px;top:838.85px;font-size:12.85px;color:#444;transform:scaleX(0.8986);transform-origin:0 0;">{ CBX-729 } CHEVROLET CAMION C…</div><div class="tx" style="left:928.10px;top:838.85px;font-size:12.85px;color:#444;letter-spacing:-0.257px;">// Mundo de Felipe Agudelo…</div><div class="tx" style="left:1233.30px;top:838.85px;font-size:12.85px;color:#444;letter-spacing:-0.145px;">Desgaste</div><div class="tx" style="left:1427.71px;top:838.85px;font-size:12.85px;color:#444;transform:scaleX(0.8946);transform-origin:0 0;">BAJO RENDIMIENTO DE EQUI…</div><div class="tx" style="left:1635.50px;top:838.85px;font-size:12.85px;color:#444;letter-spacing:-0.330px;">Alta</div><div class="tx" style="left:1808.10px;top:838.85px;font-size:12.85px;color:#444;transform:scaleX(0.9007);transform-origin:0 0;">Ning…</div><div class="tx" style="left:420.40px;top:838.85px;font-size:12.85px;color:#444;transform:scaleX(0.9289);transform-origin:0 0;">OT-5278-2024</div><div class="tx" style="left:1161.60px;top:838.85px;font-size:12.85px;color:#444;">1</div><div class="badge no" style="left:827px;top:840.0px">No</div><div class="hl" style="top:873px"></div><div class="tx" style="left:232.65px;top:300.76px;font-size:13.1px;color:#1f1f1f;letter-spacing:-0.322px;-webkit-text-stroke:0.22px #1f1f1f;transform:scaleX(0.9545);transform-origin:0 0;">Falla</div><div class="tx" style="left:408.00px;top:300.76px;font-size:13.1px;color:#1f1f1f;letter-spacing:-0.354px;-webkit-text-stroke:0.22px #1f1f1f;transform:scaleX(0.9504);transform-origin:0 0;">Orden de Trabajo…</div><div class="tx" style="left:542.91px;top:300.76px;font-size:13.1px;color:#1f1f1f;letter-spacing:-0.184px;-webkit-text-stroke:0.22px #1f1f1f;transform:scaleX(0.9743);transform-origin:0 0;">Activos</div><div class="tx" style="left:784.45px;top:300.76px;font-size:13.1px;color:#1f1f1f;letter-spacing:-0.272px;-webkit-text-stroke:0.22px #1f1f1f;transform:scaleX(0.9586);transform-origin:0 0;">Fuera de servicio…</div><div class="tx" style="left:928.02px;top:300.76px;font-size:13.1px;color:#1f1f1f;letter-spacing:-0.078px;-webkit-text-stroke:0.22px #1f1f1f;transform:scaleX(0.9890);transform-origin:0 0;">Ubicación</div><div class="tx" style="left:1127.00px;top:300.76px;font-size:13.1px;color:#1f1f1f;letter-spacing:-0.404px;-webkit-text-stroke:0.22px #1f1f1f;transform:scaleX(0.9468);transform-origin:0 0;">Cantidad Fa…</div><div class="tx" style="left:1234.91px;top:300.76px;font-size:13.1px;color:#1f1f1f;letter-spacing:-0.251px;-webkit-text-stroke:0.22px #1f1f1f;transform:scaleX(0.9609);transform-origin:0 0;">Causas de la Falla</div><div class="tx" style="left:1428.63px;top:300.76px;font-size:13.1px;color:#1f1f1f;letter-spacing:-0.162px;-webkit-text-stroke:0.22px #1f1f1f;transform:scaleX(0.9746);transform-origin:0 0;">Método de detección de falla…</div><div class="tx" style="left:1636.31px;top:300.76px;font-size:13.1px;color:#1f1f1f;letter-spacing:-0.254px;-webkit-text-stroke:0.22px #1f1f1f;transform:scaleX(0.9590);transform-origin:0 0;">Severidad de la Falla</div><div class="handle" style="left:383px"></div><div class="handle" style="left:518px"></div><div class="handle" style="left:761px"></div><div class="handle" style="left:905px"></div><div class="handle" style="left:1103px"></div><div class="handle" style="left:1211px"></div><div class="handle" style="left:1404px"></div><div class="handle" style="left:1611px"></div>

<div class="abs" style="left:1697px;top:276px;width:206px;height:81px;background:#fff;border-radius:5px;box-shadow:0 5px 14px rgba(0,0,0,.22),0 2px 4px rgba(0,0,0,.12)"></div>
<div class="abs" style="left:1699px;top:353px;width:205px;height:4px;background:#e21b1b;border-radius:2px"></div>
<svg class="abs" style="left:1711px;top:290px" width="21" height="18" viewBox="0 0 21 18" fill="none" stroke="#6f6f6f" stroke-width="1.6"><path d="M13 7.6V5.6L8.8 1.6H3.4A1.6 1.6 0 0 0 1.8 3.2V14.6A1.6 1.6 0 0 0 3.4 16.2H11A1.6 1.6 0 0 0 12.6 14.6V13.4"/><path d="M8.8 1.6V5.6H13z" fill="#6f6f6f" stroke-width="1"/><path d="M7 10.4H18.6M15.2 7L18.6 10.4 15.2 13.8" stroke-width="1.5"/></svg>
<svg class="abs" style="left:1711px;top:323px" width="17" height="18" viewBox="0 0 17 18" fill="none" stroke="#6f6f6f" stroke-width="1.6"><path d="M5.4 2.7A1.6 1.6 0 0 1 7 1.1H10.8L14.6 4.9V9.9A1.6 1.6 0 0 1 13 11.5H7A1.6 1.6 0 0 1 5.4 9.9z"/><path d="M1.8 3.6V12.4A3 3 0 0 0 4.8 15.4H13"/></svg>
<div class="tx" style="left:1744.20px;top:288.35px;font-size:14px;color:#444;letter-spacing:0.136px;">Exportar</div>
<div class="tx" style="left:1744.20px;top:321.05px;font-size:14px;color:#444;letter-spacing:0.207px;">Exportar masivamente</div>
</body></html>
